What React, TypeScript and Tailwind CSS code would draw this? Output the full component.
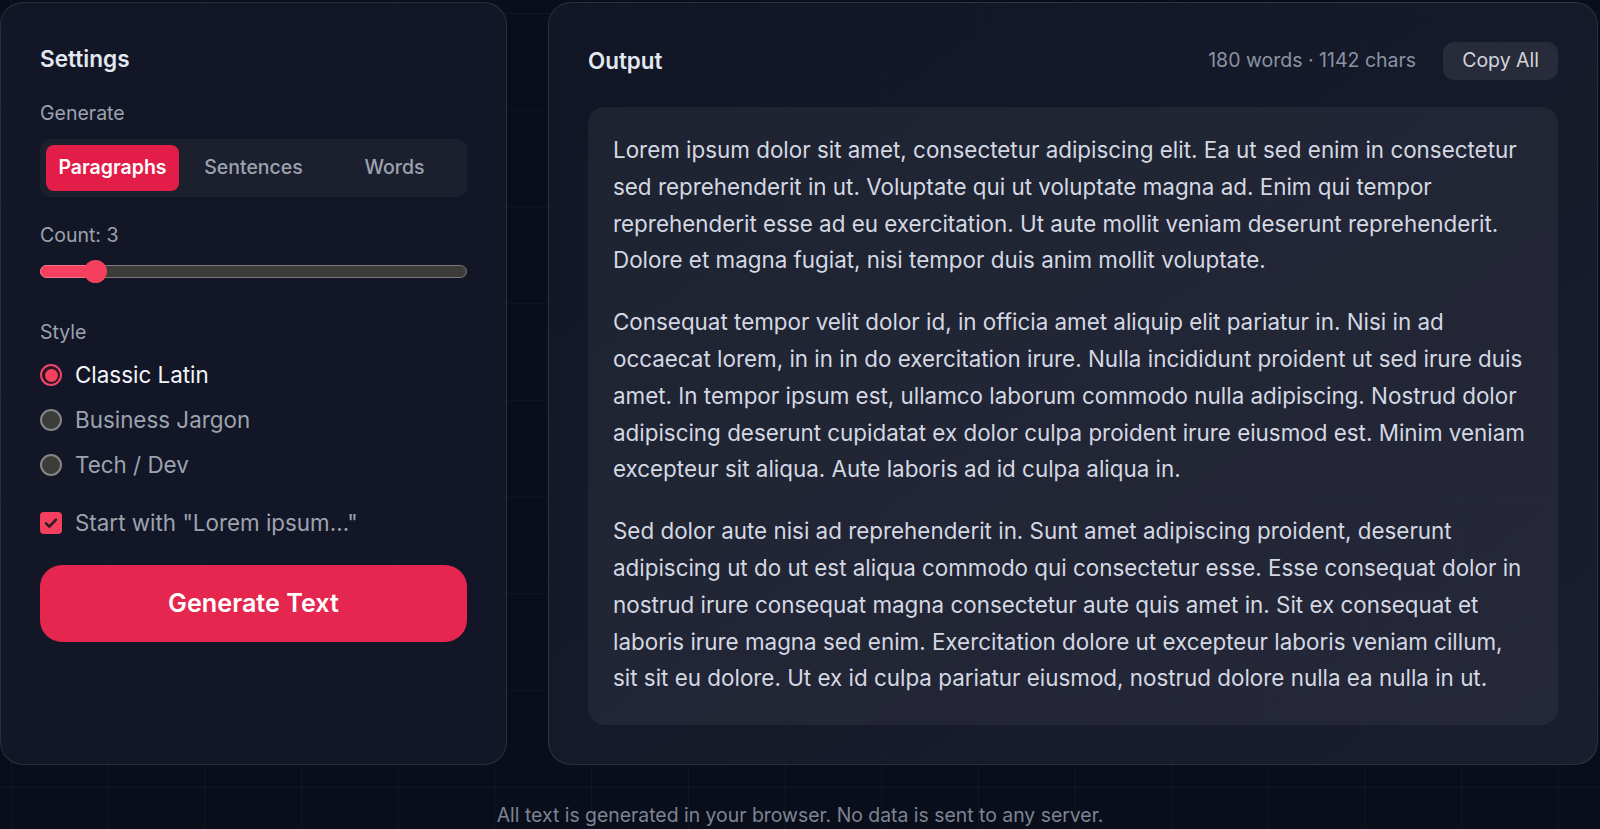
import { useState } from "react";

const paragraphs = [
	"Lorem ipsum dolor sit amet, consectetur adipiscing elit. Ea ut sed enim in consectetur sed reprehenderit in ut. Voluptate qui ut voluptate magna ad. Enim qui tempor reprehenderit esse ad eu exercitation. Ut aute mollit veniam deserunt reprehenderit. Dolore et magna fugiat, nisi tempor duis anim mollit voluptate.",
	"Consequat tempor velit dolor id, in officia amet aliquip elit pariatur in. Nisi in ad occaecat lorem, in in in do exercitation irure. Nulla incididunt proident ut sed irure duis amet. In tempor ipsum est, ullamco laborum commodo nulla adipiscing. Nostrud dolor adipiscing deserunt cupidatat ex dolor culpa proident irure eiusmod est. Minim veniam excepteur sit aliqua. Aute laboris ad id culpa aliqua in.",
	"Sed dolor aute nisi ad reprehenderit in. Sunt amet adipiscing proident, deserunt adipiscing ut do ut est aliqua commodo qui consectetur esse. Esse consequat dolor in nostrud irure consequat magna consectetur aute quis amet in. Sit ex consequat et laboris irure magna sed enim. Exercitation dolore ut excepteur laboris veniam cillum, sit sit eu dolore. Ut ex id culpa pariatur eiusmod, nostrud dolore nulla ea nulla in ut.",
];

const modes = ["Paragraphs", "Sentences", "Words"];
const styles = ["Classic Latin", "Business Jargon", "Tech / Dev"];

function Radio({ checked }: { checked: boolean }) {
	if (checked) {
		return (
			<span className="flex h-[22px] w-[22px] shrink-0 items-center justify-center rounded-full border-2 border-[#f0456a] bg-[#2a1520]">
				<span className="h-[13px] w-[13px] rounded-full bg-[#f43f5e]" />
			</span>
		);
	}
	return (
		<span className="h-[22px] w-[22px] shrink-0 rounded-full border-2 border-[#858585] bg-[#3c3c38]" />
	);
}

export default function App() {
	const [mode, setMode] = useState("Paragraphs");
	const [style, setStyle] = useState("Classic Latin");

	return (
		<div className="flex h-[829px] w-[1600px] flex-col overflow-hidden bg-[#0a0e1a] bg-[linear-gradient(to_right,rgba(255,255,255,0.03)_1px,transparent_1px),linear-gradient(to_bottom,rgba(255,255,255,0.03)_1px,transparent_1px)] bg-[size:96.7px_96.7px] bg-[position:11px_13px] font-['Inter',sans-serif]">
			<div className="mt-[2px] grid grid-cols-[507px_1050px] gap-[41px]">
				{/* Settings */}
				<div className="flex flex-col rounded-[23px] border border-white/10 bg-[rgba(20,24,40,0.88)] px-[39px] pt-[39px]">
					<h2 className="h-[33px] text-[22.6px] leading-[33px] font-semibold text-[#e2e8f0]">
						Settings
					</h2>

					<p className="mt-[24px] h-[28px] text-[19.5px] leading-[28px] text-[#9ca3af]">
						Generate
					</p>
					<div className="mt-[12px] flex h-[58px] gap-[8px] rounded-[11px] bg-white/[0.04] p-[6px]">
						{modes.map((m) => (
							<button
								key={m}
								onClick={() => setMode(m)}
								className={
									m === mode
										? "flex-1 rounded-[8px] bg-[#e11d48] text-[19.5px] font-semibold text-white"
										: "flex-1 rounded-[8px] text-[19.5px] font-medium text-[#9ca3af]"
								}
							>
								{m}
							</button>
						))}
					</div>

					<p className="mt-[24px] h-[28px] text-[19.5px] leading-[28px] text-[#9ca3af]">
						Count: 3
					</p>
					<div className="relative mt-[10px] flex h-[24px] items-center">
						<div className="h-[13px] w-full rounded-full border border-[#7a7a7a] bg-[#3c3c38]" />
						<div className="absolute left-0 h-[13px] w-[60px] rounded-full border border-[#f7738c] bg-[#f43f5e]" />
						<div className="absolute left-[44px] h-[23px] w-[23px] rounded-full bg-[#f43f5e]" />
					</div>

					<p className="mt-[35px] h-[28px] text-[19.5px] leading-[28px] text-[#9ca3af]">
						Style
					</p>
					<div className="mt-[12px] flex flex-col gap-[11px]">
						{styles.map((s) => (
							<label
								key={s}
								onClick={() => setStyle(s)}
								className="flex h-[34px] cursor-pointer items-center gap-[13px]"
							>
								<Radio checked={s === style} />
								<span
									className={
										s === style
											? "text-[22.4px] text-[#f1f5f9]"
											: "text-[22.4px] text-[#9ca3af]"
									}
								>
									{s}
								</span>
							</label>
						))}
					</div>

					<label className="mt-[24px] flex h-[34px] items-center gap-[13px]">
						<span className="flex h-[22px] w-[22px] shrink-0 items-center justify-center rounded-[4px] bg-[#f43f5e]">
							<svg width="16" height="16" viewBox="0 0 24 24" fill="none">
								<path
									d="M4.5 12.5l5 5L19.5 7"
									stroke="#1f1f23"
									strokeWidth="3.6"
									strokeLinecap="round"
									strokeLinejoin="round"
								/>
							</svg>
						</span>
						<span className="text-[22.4px] text-[#9ca3af]">
							Start with "Lorem ipsum..."
						</span>
					</label>

					<button className="mt-[25px] h-[77px] w-full rounded-[22px] bg-[#e5274f] text-[25.2px] font-semibold text-white">
						Generate Text
					</button>
				</div>

				{/* Output */}
				<div className="flex flex-col rounded-[23px] border border-white/10 bg-gradient-to-br from-[rgba(19,23,39,0.9)] to-[rgba(27,31,47,0.95)] p-[39px]">
					<div className="flex h-[38px] items-center justify-between">
						<h2 className="text-[22.4px] font-semibold text-[#e2e8f0]">Output</h2>
						<div className="flex items-center gap-[27px]">
							<span className="text-[19.5px] text-[#8b92a3]">
								180 words · 1142 chars
							</span>
							<button className="h-[38px] rounded-[11px] bg-white/[0.08] px-[19px] text-[19.5px] text-[#d1d5db]">
								Copy All
							</button>
						</div>
					</div>

					<div className="mt-[27px] space-y-[25px] rounded-[17px] bg-white/[0.05] px-[25px] pt-[25px] pb-[28px] text-[22.4px] leading-[36.8px] text-[#d4d8e3]">
						{paragraphs.map((p, i) => (
							<p key={i}>{p}</p>
						))}
					</div>
				</div>
			</div>

			<p className="mt-[36px] text-center text-[19.4px] leading-[28px] text-[#7d8494]">
				All text is generated in your browser. No data is sent to any server.
			</p>
		</div>
	);
}
